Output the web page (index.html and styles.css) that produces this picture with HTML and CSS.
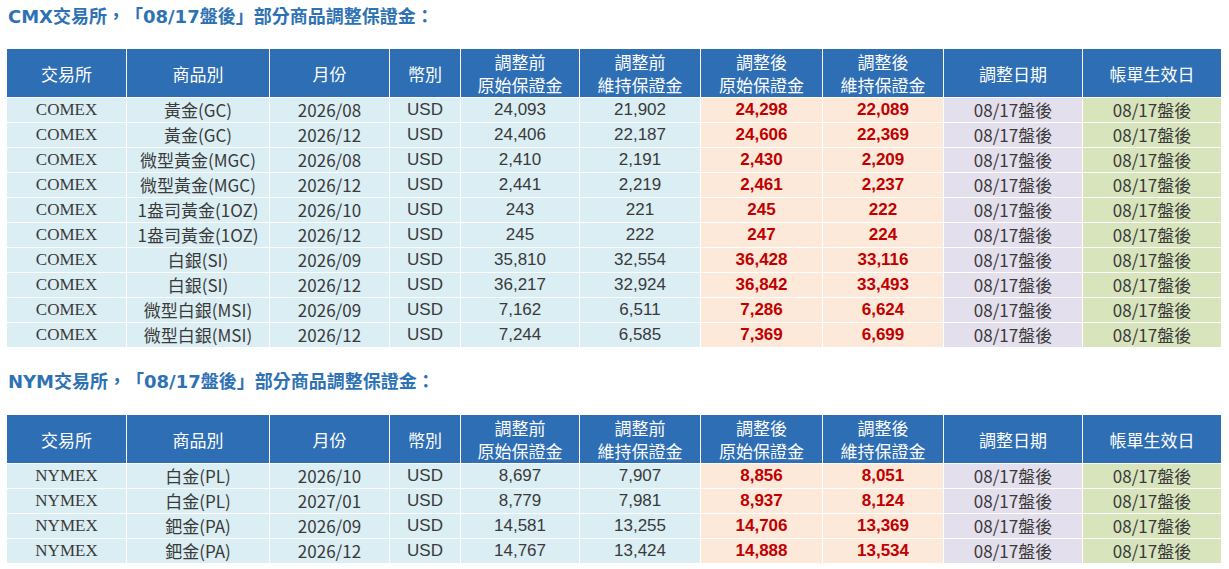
FILE: index.html
```html
<!DOCTYPE html>
<html lang="zh-Hant">
<head>
<meta charset="utf-8">
<title>調整保證金</title>
<link rel="stylesheet" href="styles.css">
</head>
<body>
<section class="block">
  <h2 class="title">CMX交易所，「08/17盤後」部分商品調整保證金：</h2>
  <table class="grid">
    <colgroup>
      <col class="c1"><col class="c2"><col class="c3"><col class="c4"><col class="c5">
      <col class="c6"><col class="c7"><col class="c8"><col class="c9"><col class="c10">
    </colgroup>
    <thead>
      <tr>
        <th>交易所</th><th>商品別</th><th>月份</th><th>幣別</th>
        <th>調整前<br>原始保證金</th><th>調整前<br>維持保證金</th>
        <th>調整後<br>原始保證金</th><th>調整後<br>維持保證金</th>
        <th>調整日期</th><th>帳單生效日</th>
      </tr>
    </thead>
    <tbody>
      <tr><td class="ex">COMEX</td><td class="cj">黃金(GC)</td><td class="cj">2026/08</td><td class="usd">USD</td><td class="num">24,093</td><td class="num">21,902</td><td class="up">24,298</td><td class="up">22,089</td><td class="adj">08/17盤後</td><td class="eff">08/17盤後</td></tr>
      <tr><td class="ex">COMEX</td><td class="cj">黃金(GC)</td><td class="cj">2026/12</td><td class="usd">USD</td><td class="num">24,406</td><td class="num">22,187</td><td class="up">24,606</td><td class="up">22,369</td><td class="adj">08/17盤後</td><td class="eff">08/17盤後</td></tr>
      <tr><td class="ex">COMEX</td><td class="cj">微型黃金(MGC)</td><td class="cj">2026/08</td><td class="usd">USD</td><td class="num">2,410</td><td class="num">2,191</td><td class="up">2,430</td><td class="up">2,209</td><td class="adj">08/17盤後</td><td class="eff">08/17盤後</td></tr>
      <tr><td class="ex">COMEX</td><td class="cj">微型黃金(MGC)</td><td class="cj">2026/12</td><td class="usd">USD</td><td class="num">2,441</td><td class="num">2,219</td><td class="up">2,461</td><td class="up">2,237</td><td class="adj">08/17盤後</td><td class="eff">08/17盤後</td></tr>
      <tr><td class="ex">COMEX</td><td class="cj">1盎司黃金(1OZ)</td><td class="cj">2026/10</td><td class="usd">USD</td><td class="num">243</td><td class="num">221</td><td class="up">245</td><td class="up">222</td><td class="adj">08/17盤後</td><td class="eff">08/17盤後</td></tr>
      <tr><td class="ex">COMEX</td><td class="cj">1盎司黃金(1OZ)</td><td class="cj">2026/12</td><td class="usd">USD</td><td class="num">245</td><td class="num">222</td><td class="up">247</td><td class="up">224</td><td class="adj">08/17盤後</td><td class="eff">08/17盤後</td></tr>
      <tr><td class="ex">COMEX</td><td class="cj">白銀(SI)</td><td class="cj">2026/09</td><td class="usd">USD</td><td class="num">35,810</td><td class="num">32,554</td><td class="up">36,428</td><td class="up">33,116</td><td class="adj">08/17盤後</td><td class="eff">08/17盤後</td></tr>
      <tr><td class="ex">COMEX</td><td class="cj">白銀(SI)</td><td class="cj">2026/12</td><td class="usd">USD</td><td class="num">36,217</td><td class="num">32,924</td><td class="up">36,842</td><td class="up">33,493</td><td class="adj">08/17盤後</td><td class="eff">08/17盤後</td></tr>
      <tr><td class="ex">COMEX</td><td class="cj">微型白銀(MSI)</td><td class="cj">2026/09</td><td class="usd">USD</td><td class="num">7,162</td><td class="num">6,511</td><td class="up">7,286</td><td class="up">6,624</td><td class="adj">08/17盤後</td><td class="eff">08/17盤後</td></tr>
      <tr><td class="ex">COMEX</td><td class="cj">微型白銀(MSI)</td><td class="cj">2026/12</td><td class="usd">USD</td><td class="num">7,244</td><td class="num">6,585</td><td class="up">7,369</td><td class="up">6,699</td><td class="adj">08/17盤後</td><td class="eff">08/17盤後</td></tr>
    </tbody>
  </table>
</section>
<section class="block block-second">
  <h2 class="title">NYM交易所，「08/17盤後」部分商品調整保證金：</h2>
  <table class="grid">
    <colgroup>
      <col class="c1"><col class="c2"><col class="c3"><col class="c4"><col class="c5">
      <col class="c6"><col class="c7"><col class="c8"><col class="c9"><col class="c10">
    </colgroup>
    <thead>
      <tr>
        <th>交易所</th><th>商品別</th><th>月份</th><th>幣別</th>
        <th>調整前<br>原始保證金</th><th>調整前<br>維持保證金</th>
        <th>調整後<br>原始保證金</th><th>調整後<br>維持保證金</th>
        <th>調整日期</th><th>帳單生效日</th>
      </tr>
    </thead>
    <tbody>
      <tr><td class="ex">NYMEX</td><td class="cj">白金(PL)</td><td class="cj">2026/10</td><td class="usd">USD</td><td class="num">8,697</td><td class="num">7,907</td><td class="up">8,856</td><td class="up">8,051</td><td class="adj">08/17盤後</td><td class="eff">08/17盤後</td></tr>
      <tr><td class="ex">NYMEX</td><td class="cj">白金(PL)</td><td class="cj">2027/01</td><td class="usd">USD</td><td class="num">8,779</td><td class="num">7,981</td><td class="up">8,937</td><td class="up">8,124</td><td class="adj">08/17盤後</td><td class="eff">08/17盤後</td></tr>
      <tr><td class="ex">NYMEX</td><td class="cj">鈀金(PA)</td><td class="cj">2026/09</td><td class="usd">USD</td><td class="num">14,581</td><td class="num">13,255</td><td class="up">14,706</td><td class="up">13,369</td><td class="adj">08/17盤後</td><td class="eff">08/17盤後</td></tr>
      <tr><td class="ex">NYMEX</td><td class="cj">鈀金(PA)</td><td class="cj">2026/12</td><td class="usd">USD</td><td class="num">14,767</td><td class="num">13,424</td><td class="up">14,888</td><td class="up">13,534</td><td class="adj">08/17盤後</td><td class="eff">08/17盤後</td></tr>
    </tbody>
  </table>
</section>
</body>
</html>
```

FILE: styles.css
```css
html, body {
  margin: 0;
  padding: 0;
  background: #ffffff;
}

body {
  font-family: "Noto Sans CJK TC", "Liberation Sans", sans-serif;
  color: #3a3a3a;
  text-spacing-trim: space-all;
}

.block {
  padding-left: 6px;
}

.title {
  margin: 0 0 14px 2px;
  height: 34px;
  line-height: 34px;
  font-size: 18px;
  font-weight: bold;
  color: #2e72b4;
  font-family: "DejaVu Sans", "Noto Sans CJK TC", sans-serif;
  text-spacing-trim: space-all;
}

.block-second .title {
  margin-top: 17px;
  margin-bottom: 15px;
}

.grid {
  border-collapse: collapse;
  table-layout: fixed;
  width: 1215px;
}

.c1 { width: 120px; }
.c2 { width: 143px; }
.c3 { width: 120px; }
.c4 { width: 71px; }
.c5 { width: 119px; }
.c6 { width: 121px; }
.c7 { width: 122px; }
.c8 { width: 121px; }
.c9 { width: 139px; }
.c10 { width: 139px; }

.grid th,
.grid td {
  border: 1px solid #ffffff;
  padding: 0;
  text-align: center;
  white-space: nowrap;
}

.grid th {
  background: #2e6eb4;
  color: #ffffff;
  font-weight: normal;
  font-size: 17px;
  line-height: 23px;
  height: 48px;
  font-family: "Noto Sans CJK TC", sans-serif;
}

.grid td {
  height: 24px;
  line-height: 24px;
  font-size: 17px;
  background: #daeef3;
}

.ex {
  font-family: "Liberation Serif", serif;
}

.cj {
  font-family: "Noto Sans CJK TC", sans-serif;
}

.usd {
  font-family: "Liberation Sans", sans-serif;
}

.num {
  font-family: "Liberation Sans Narrow", "Arial Narrow", "Liberation Sans", sans-serif;
}

.grid td.up {
  background: #fde9d9;
  color: #c00000;
  font-weight: bold;
  font-family: "Liberation Sans Narrow", "Arial Narrow", "Liberation Sans", sans-serif;
}

.grid td.adj {
  background: #e4dfec;
  font-family: "Noto Sans CJK TC", sans-serif;
}

.grid td.eff {
  background: #d8e4bc;
  font-family: "Noto Sans CJK TC", sans-serif;
}
```
